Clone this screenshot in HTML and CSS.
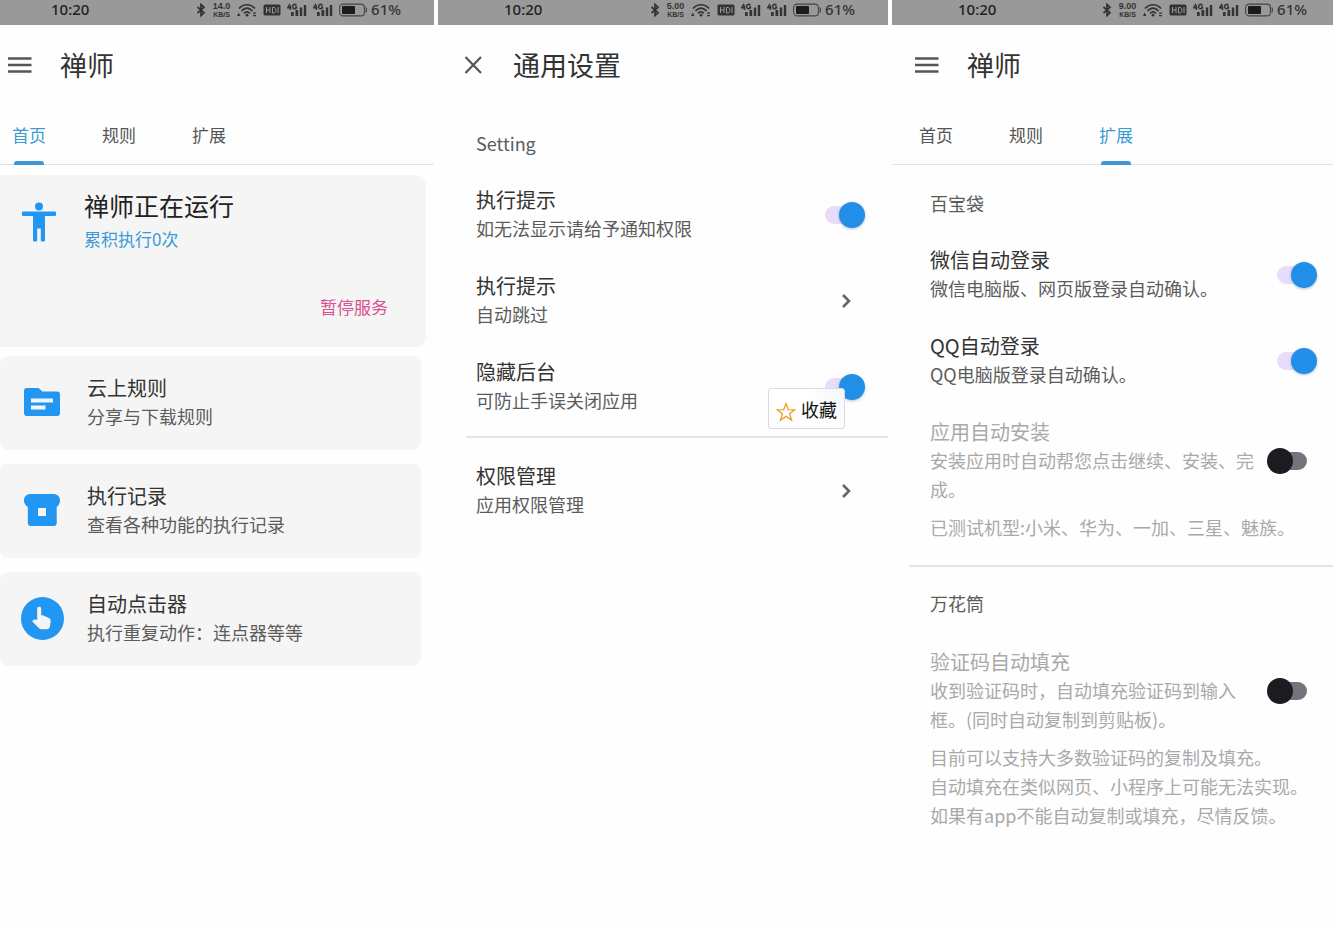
FILE: index.html
```html
<!DOCTYPE html>
<html lang="zh-CN">
<head>
<meta charset="utf-8">
<meta name="viewport" content="width=device-width, initial-scale=1">
<title>禅师</title>
<link rel="stylesheet" href="styles.css">
</head>
<body>
<svg class="sprite" aria-hidden="true">
  <symbol id="bluetooth" viewBox="0 0 10 14"><path d="M1.500 4l6.500 5.700L5 12.500v-11l3 2.800L1.500 10" fill="none" stroke="currentColor" stroke-width="1.700"/></symbol>
  <symbol id="wifi" viewBox="0 0 20 14"><g fill="none" stroke="currentColor" stroke-width="1.700"><path d="M2 5.500C6.500.5 13.500.5 18 5.500"/><path d="M4.500 8C8 4.200 12 4.200 15.500 8"/><path d="M7 10.300c2-1.900 4-1.900 6 0"/></g><circle cx="10" cy="12.200" r="1.400" fill="currentColor"/><path d="M0 13l1.700-3.500L3.400 13zM16 9.500h3v1.200h-3zM16 12h3v1.200h-3z" fill="currentColor"/></symbol>
  <symbol id="hd" viewBox="0 0 18 12"><rect x=".5" y=".5" width="17" height="11" rx="1.500" fill="currentColor"/><path d="M3.500 3v6M7 3v6M3.500 6H7M9.500 3.500V9h1.500c2.500 0 2.500-5.500 0-5.500zM15 3v6" fill="none" stroke="#999" stroke-width="1"/></symbol>
  <symbol id="signal" viewBox="0 0 20 14"><path d="M4 9h2.700v4H4zM8.500 7h2.700v6H8.500zM12.800 4.500h2.400V13h-2.400zM16.800 2h2.400v11h-2.400z" fill="currentColor"/><path d="M3 1L.7 4.700h3.600M3.400 2.500V7M9.500 2C7 .5 5.500 2 5.700 4s2.500 2.300 3.700 1V4H8" fill="none" stroke="currentColor" stroke-width="1.500"/></symbol>
  <symbol id="battery" viewBox="0 0 28 14"><rect x=".6" y="1.100" width="24.800" height="11.800" rx="3.500" fill="none" stroke="#444" stroke-width="1.100"/><rect x="3" y="3" width="13" height="8" rx="1" fill="#1b1b1b"/><path d="M26.800 4.500q1.200 2.500 0 5" fill="none" stroke="#444" stroke-width="1.200"/></symbol>
  <symbol id="menu" viewBox="0 0 24 24"><path d="M0 5.500h23.500M0 12h23.500M0 18.500h23.500" fill="none" stroke="currentColor" stroke-width="2.300"/></symbol>
  <symbol id="close" viewBox="0 0 24 24"><path d="M4.500 4l15.500 16M20 4L4.500 20" fill="none" stroke="currentColor" stroke-width="2.200"/></symbol>
  <symbol id="chevron" viewBox="0 0 24 24"><path d="M9 6l6 6-6 6" fill="none" stroke="currentColor" stroke-width="2.600"/></symbol>
</svg>

<main class="screens">
  <section class="screen home">
    <div class="status">
      <time>10:20</time>
      <div class="status-icons">
        <svg class="i-bt"><use href="#bluetooth"/></svg>
        <span class="speed"><b>14.0</b><b class="unit">KB/S</b></span>
        <svg class="i-wifi"><use href="#wifi"/></svg>
        <svg class="i-hd"><use href="#hd"/></svg>
        <svg class="i-signal"><use href="#signal"/></svg>
        <svg class="i-signal"><use href="#signal"/></svg>
        <span class="power"><svg class="i-battery"><use href="#battery"/></svg>61%</span>
      </div>
    </div>
    <header class="bar">
      <button class="icon-button" aria-label="菜单"><svg><use href="#menu"/></svg></button>
      <h1>禅师</h1>
    </header>
    <nav class="tabs">
      <button class="tab active">首页</button>
      <button class="tab">规则</button>
      <button class="tab">扩展</button>
    </nav>

    <article class="service">
      <div class="service-head">
        <svg class="person" viewBox="0 0 34 40"><circle cx="17" cy="4.500" r="4" fill="currentColor"/><path d="M1 9.500h32a1 1 0 0 1 1 1v2.500a1 1 0 0 1-1 1H23V38.500a1 1 0 0 1-1 1h-2.200a1 1 0 0 1-1-1V26.500h-3.600v12a1 1 0 0 1-1 1H12a1 1 0 0 1-1-1V14H1a1 1 0 0 1-1-1v-2.500a1 1 0 0 1 1-1z" fill="currentColor"/></svg>
        <div>
          <h2>禅师正在运行</h2>
          <p>累积执行0次</p>
        </div>
      </div>
      <button class="pause">暂停服务</button>
    </article>

    <div class="cards">
      <button class="card">
        <svg class="card-icon" viewBox="0 0 43 43"><path d="M6 7h11.500l4 3.500H36a3 3 0 0 1 3 3V32a3 3 0 0 1-3 3H6a3 3 0 0 1-3-3V10a3 3 0 0 1 3-3z" fill="currentColor"/><path d="M10 17.500h22v4H10zM10 24.500h14.500v4H10z" fill="#f5f5f5"/></svg>
        <span class="copy"><span class="title">云上规则</span><span class="sub">分享与下载规则</span></span>
      </button>
      <button class="card">
        <svg class="card-icon" viewBox="0 0 43 43"><path d="M10 5h22c4.500 0 7 2.500 7 6.500 0 3-1.300 5-3.300 6.500V34a3 3 0 0 1-3 3H9.800a3 3 0 0 1-3-3V18C4.500 16.500 3 14.500 3 11.500 3 7.500 5.500 5 10 5z" fill="currentColor"/><path d="M17 19h8v8h-8z" fill="#f5f5f5"/></svg>
        <span class="copy"><span class="title">执行记录</span><span class="sub">查看各种功能的执行记录</span></span>
      </button>
      <button class="card">
        <svg class="card-icon" viewBox="0 0 43 43"><circle cx="21.500" cy="21.500" r="21.500" fill="currentColor"/><path d="M16.200 11.500c0-2.400 4-2.400 4 0v6.800h1.600l6 2.700c1.400.6 2.100 1.700 1.900 3.200l-.8 5.300c-.3 1.800-1.400 2.800-3.200 2.800h-4.700c-1.300 0-2.300-.4-3.200-1.300l-6.700-6.700 1.200-1.300c.5-.5 1.200-.7 1.900-.5l2 .5z" fill="#f5f5f5"/></svg>
        <span class="copy"><span class="title">自动点击器</span><span class="sub">执行重复动作：连点器等等</span></span>
      </button>
    </div>
  </section>

  <section class="screen settings">
    <div class="status">
      <time>10:20</time>
      <div class="status-icons">
        <svg class="i-bt"><use href="#bluetooth"/></svg>
        <span class="speed"><b>5.00</b><b class="unit">KB/S</b></span>
        <svg class="i-wifi"><use href="#wifi"/></svg>
        <svg class="i-hd"><use href="#hd"/></svg>
        <svg class="i-signal"><use href="#signal"/></svg>
        <svg class="i-signal"><use href="#signal"/></svg>
        <span class="power"><svg class="i-battery"><use href="#battery"/></svg>61%</span>
      </div>
    </div>
    <header class="bar">
      <button class="icon-button" aria-label="关闭"><svg><use href="#close"/></svg></button>
      <h1>通用设置</h1>
    </header>
    <div class="list">
      <h3>Setting</h3>
      <div class="row">
        <label class="copy" for="notice"><span class="title">执行提示</span><span class="sub">如无法显示请给予通知权限</span></label>
        <input class="switch" type="checkbox" id="notice" checked>
      </div>
      <button class="row">
        <span class="copy"><span class="title">执行提示</span><span class="sub">自动跳过</span></span>
        <svg class="chevron"><use href="#chevron"/></svg>
      </button>
      <div class="row">
        <label class="copy" for="hide"><span class="title">隐藏后台</span><span class="sub">可防止手误关闭应用</span></label>
        <input class="switch" type="checkbox" id="hide" checked>
        <button class="favorite">
          <svg viewBox="0 0 20 20"><path d="M10 1.500l2.300 6.100 6.400.2-5.100 4 1.900 6.300L10 14.400l-5.500 3.700 1.900-6.300-5.100-4 6.400-.2z" fill="none" stroke="#f0a22e" stroke-width="1.400"/></svg>
          收藏
        </button>
      </div>
      <hr>
      <button class="row">
        <span class="copy"><span class="title">权限管理</span><span class="sub">应用权限管理</span></span>
        <svg class="chevron"><use href="#chevron"/></svg>
      </button>
    </div>
  </section>

  <section class="screen extend">
    <div class="status">
      <time>10:20</time>
      <div class="status-icons">
        <svg class="i-bt"><use href="#bluetooth"/></svg>
        <span class="speed"><b>9.00</b><b class="unit">KB/S</b></span>
        <svg class="i-wifi"><use href="#wifi"/></svg>
        <svg class="i-hd"><use href="#hd"/></svg>
        <svg class="i-signal"><use href="#signal"/></svg>
        <svg class="i-signal"><use href="#signal"/></svg>
        <span class="power"><svg class="i-battery"><use href="#battery"/></svg>61%</span>
      </div>
    </div>
    <header class="bar">
      <button class="icon-button" aria-label="菜单"><svg><use href="#menu"/></svg></button>
      <h1>禅师</h1>
    </header>
    <nav class="tabs">
      <button class="tab">首页</button>
      <button class="tab">规则</button>
      <button class="tab active">扩展</button>
    </nav>
    <div class="list">
      <h3>百宝袋</h3>
      <div class="row">
        <label class="copy" for="wechat"><span class="title">微信自动登录</span><span class="sub">微信电脑版、网页版登录自动确认。</span></label>
        <input class="switch" type="checkbox" id="wechat" checked>
      </div>
      <div class="row">
        <label class="copy" for="qq"><span class="title">QQ自动登录</span><span class="sub">QQ电脑版登录自动确认。</span></label>
        <input class="switch" type="checkbox" id="qq" checked>
      </div>
      <div class="row off">
        <label class="copy" for="install"><span class="title">应用自动安装</span><span class="sub">安装应用时自动帮您点击继续、安装、完成。</span></label>
        <input class="switch" type="checkbox" id="install">
        <p class="note">已测试机型:小米、华为、一加、三星、魅族。</p>
      </div>
      <hr>
      <h3>万花筒</h3>
      <div class="row off">
        <label class="copy" for="code"><span class="title">验证码自动填充</span><span class="sub">收到验证码时，自动填充验证码到输入框。(同时自动复制到剪贴板)。</span></label>
        <input class="switch" type="checkbox" id="code">
        <p class="note">目前可以支持大多数验证码的复制及填充。<br>自动填充在类似网页、小程序上可能无法实现。<br>如果有app不能自动复制或填充，尽情反馈。</p>
      </div>
    </div>
  </section>
</main>
</body>
</html>
```

FILE: styles.css
```css
* {
  box-sizing: border-box;
}

body {
  margin: 0;
  background: #fefefe;
  color: #333;
  font-family: "Noto Sans CJK SC", "Noto Sans", sans-serif;
}

h1, h2, h3, p {
  margin: 0;
  font-weight: 400;
}

button {
  padding: 0;
  border: 0;
  background: none;
  color: inherit;
  font: inherit;
  text-align: left;
  cursor: pointer;
}

svg {
  display: block;
  flex: none;
}

.sprite {
  display: none;
}

.screens {
  display: grid;
  grid-template-columns: 434fr 450fr 441fr;
  gap: 4px;
  min-height: 100vh;
}

.screen {
  --inset: 15px;
  --end: 23px;
  --rule: 28px;
  min-width: 0;
}

.home {
  --inset: 0px;
}

.extend {
  --end: 16px;
  --rule: 17px;
}

/* Status bar */
.status {
  display: flex;
  align-items: center;
  justify-content: space-between;
  height: 25px;
  padding: 0 calc(var(--end) + 10px) 6px calc(var(--inset) + 51px);
  background: #999;
  color: #222;
  font: 500 15px/19px "Noto Sans", sans-serif;
}

.status-icons {
  display: flex;
  align-items: center;
  gap: 6px;
  color: #333;
}

.speed {
  display: flex;
  flex-direction: column;
  align-items: center;
  width: 19px;
  font-family: "Liberation Sans", sans-serif;
  font-size: 9px;
  line-height: 10px;
}

.speed b {
  font-weight: 700;
}

.speed .unit {
  font-size: 7px;
  line-height: 8px;
}

.power {
  display: flex;
  align-items: center;
  gap: 4px;
}

.i-bt { width: 10px; height: 14px; }
.i-wifi { width: 20px; height: 14px; }
.i-hd { width: 18px; height: 12px; }
.i-signal { width: 20px; height: 14px; }
.i-battery { width: 28px; height: 14px; }

/* Title bar */
.bar {
  display: flex;
  align-items: center;
  gap: 28px;
  height: 80px;
  padding-left: calc(var(--inset) + 8px);
}

.icon-button {
  color: #555;
}

.icon-button svg {
  width: 24px;
  height: 24px;
}

h1 {
  font-size: 27px;
  line-height: 40px;
}

/* Tabs */
.tabs {
  display: flex;
  gap: 56px;
  height: 60px;
  padding-left: calc(var(--inset) + 12px);
  border-bottom: 1px solid #e2e2e2;
}

.tab {
  position: relative;
  color: #555;
  font-size: 17px;
}

.tab.active {
  color: #3b9ad6;
}

.tab.active::after {
  content: "";
  position: absolute;
  inset: auto 2px -1px;
  height: 4px;
  border-radius: 3px 3px 0 0;
  background: #3d97d8;
}

/* Home */
.service {
  margin: 10px 8px 9px 0;
  padding: 13px 38px 23px 22px;
  border-radius: 0 10px 10px 0;
  background: #f5f5f5;
  line-height: 34px;
}

.service-head {
  display: flex;
  align-items: center;
  gap: 28px;
}

.person {
  width: 34px;
  height: 40px;
  color: #2196f3;
}

.service h2 {
  color: #222;
  font-size: 25px;
}

.service p {
  color: #3b9ad6;
  font-size: 17px;
}

.pause {
  display: block;
  margin: 34px 0 0 auto;
  color: #dc4f92;
  font-size: 17px;
  line-height: 34px;
}

.cards {
  display: grid;
  gap: 14px;
  padding-right: 13px;
}

.card {
  display: flex;
  align-items: center;
  gap: 23px;
  height: 94px;
  padding-left: 21px;
  padding-bottom: 1px;
  border-radius: 8px;
  background: #f5f5f5;
}

.card-icon {
  width: 43px;
  height: 43px;
  color: #2196f3;
}

.copy {
  display: block;
}

.title,
.sub {
  display: block;
}

.title {
  color: #333;
  font-size: 20px;
  line-height: 28px;
}

.sub,
.note {
  color: #5c5c5c;
  font-size: 18px;
  line-height: 29px;
}

/* Settings lists */
.list {
  padding-top: 10px;
}

h3 {
  padding-left: 38px;
  color: #5c5c5c;
  font-size: 18px;
  line-height: 57px;
}

.row {
  position: relative;
  display: grid;
  grid-template-columns: 1fr auto;
  align-items: center;
  column-gap: 8px;
  width: 100%;
  padding: 14px var(--end) 15px 38px;
}

.note {
  grid-column: 1 / -1;
  margin: 9px 0 2px;
}

.off .title,
.off .sub,
.off .note {
  color: #a9a9a9;
}

hr {
  height: 2px;
  margin: 6px 0 10px var(--rule);
  border: 0;
  background: #e4e4e4;
}

hr + h3 {
  padding-bottom: 4px;
  line-height: 53px;
}

.chevron {
  width: 24px;
  height: 24px;
  margin-right: 7px;
  color: #666;
}

.switch {
  appearance: none;
  display: grid;
  align-items: center;
  width: 50px;
  height: 26px;
  margin: 0;
  cursor: pointer;
}

.switch::before,
.switch::after {
  content: "";
  grid-area: 1 / 1;
}

.switch::before {
  height: 18px;
  margin: 0 10px;
  border-radius: 9px;
  background: #77727b;
}

.switch::after {
  width: 26px;
  height: 26px;
  border-radius: 50%;
  background: #1c1b20;
}

.switch:checked::before {
  background: #e8dcfb;
}

.switch:checked::after {
  justify-self: end;
  background: #218fe8;
  box-shadow: 0 1px 3px rgba(0, 60, 120, 0.3);
}

.favorite {
  position: absolute;
  top: 44px;
  right: 43px;
  display: flex;
  align-items: center;
  gap: 5px;
  height: 41px;
  padding: 0 7px;
  border: 1px solid #d9dbe3;
  border-radius: 3px;
  background: linear-gradient(45deg, #fff 60%, #f3f6fd);
  color: #111;
  font-size: 18px;
}

.favorite svg {
  width: 20px;
  height: 20px;
  margin-top: 6px;
}
```
